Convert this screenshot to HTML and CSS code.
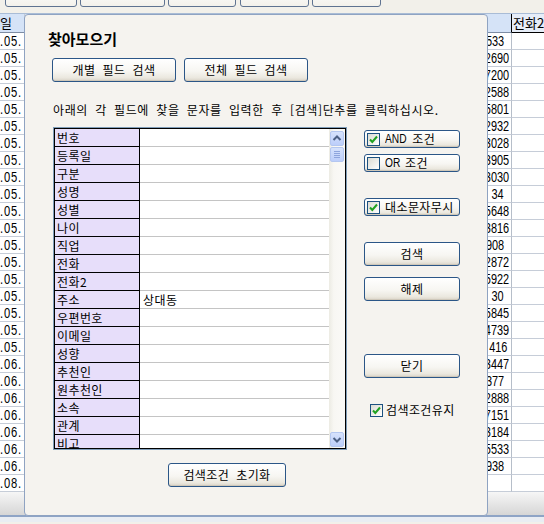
FILE: index.html
```html
<!DOCTYPE html>
<html lang="ko">
<head>
<meta charset="utf-8">
<title>찾아모으기</title>
<link rel="stylesheet" href="styles.css">
</head>
<body>
<div class="app">
  <div class="toolbar">
    <span class="tbtn t1"></span>
    <span class="tbtn t2"></span>
    <span class="tbtn t3"></span>
    <span class="tbtn t4"></span>
    <span class="tbtn t5"></span>
  </div>
  <div class="grid">
    <div class="row head"><div class="cell c1">일</div><div class="cell c2"></div><div class="cell c3">전화2</div></div>
    <div class="row"><div class="cell c1"><span class="d">.05.</span></div><div class="cell c2 s"><span class="n">3533</span></div><div class="cell c3"></div></div>
    <div class="row"><div class="cell c1"><span class="d">.05.</span></div><div class="cell c2"><span class="n">2690</span></div><div class="cell c3"></div></div>
    <div class="row"><div class="cell c1"><span class="d">.05.</span></div><div class="cell c2"><span class="n">7200</span></div><div class="cell c3"></div></div>
    <div class="row"><div class="cell c1"><span class="d">.05.</span></div><div class="cell c2"><span class="n">2588</span></div><div class="cell c3"></div></div>
    <div class="row"><div class="cell c1"><span class="d">.05.</span></div><div class="cell c2"><span class="n">5801</span></div><div class="cell c3"></div></div>
    <div class="row"><div class="cell c1"><span class="d">.05.</span></div><div class="cell c2"><span class="n">2932</span></div><div class="cell c3"></div></div>
    <div class="row"><div class="cell c1"><span class="d">.05.</span></div><div class="cell c2"><span class="n">3028</span></div><div class="cell c3"></div></div>
    <div class="row"><div class="cell c1"><span class="d">.05.</span></div><div class="cell c2"><span class="n">3905</span></div><div class="cell c3"></div></div>
    <div class="row"><div class="cell c1"><span class="d">.05.</span></div><div class="cell c2"><span class="n">3030</span></div><div class="cell c3"></div></div>
    <div class="row"><div class="cell c1"><span class="d">.05.</span></div><div class="cell c2 s"><span class="n">34</span></div><div class="cell c3"></div></div>
    <div class="row"><div class="cell c1"><span class="d">.05.</span></div><div class="cell c2"><span class="n">5648</span></div><div class="cell c3"></div></div>
    <div class="row"><div class="cell c1"><span class="d">.05.</span></div><div class="cell c2"><span class="n">3816</span></div><div class="cell c3"></div></div>
    <div class="row"><div class="cell c1"><span class="d">.05.</span></div><div class="cell c2 s"><span class="n">1908</span></div><div class="cell c3"></div></div>
    <div class="row"><div class="cell c1"><span class="d">.05.</span></div><div class="cell c2"><span class="n">2872</span></div><div class="cell c3"></div></div>
    <div class="row"><div class="cell c1"><span class="d">.05.</span></div><div class="cell c2"><span class="n">5922</span></div><div class="cell c3"></div></div>
    <div class="row"><div class="cell c1"><span class="d">.05.</span></div><div class="cell c2 s"><span class="n">30</span></div><div class="cell c3"></div></div>
    <div class="row"><div class="cell c1"><span class="d">.05.</span></div><div class="cell c2"><span class="n">5845</span></div><div class="cell c3"></div></div>
    <div class="row"><div class="cell c1"><span class="d">.05.</span></div><div class="cell c2"><span class="n">4739</span></div><div class="cell c3"></div></div>
    <div class="row"><div class="cell c1"><span class="d">.05.</span></div><div class="cell c2 m"><span class="n">416</span></div><div class="cell c3"></div></div>
    <div class="row"><div class="cell c1"><span class="d">.06.</span></div><div class="cell c2"><span class="n">3447</span></div><div class="cell c3"></div></div>
    <div class="row"><div class="cell c1"><span class="d">.06.</span></div><div class="cell c2 s"><span class="n">1377</span></div><div class="cell c3"></div></div>
    <div class="row"><div class="cell c1"><span class="d">.06.</span></div><div class="cell c2"><span class="n">2888</span></div><div class="cell c3"></div></div>
    <div class="row"><div class="cell c1"><span class="d">.06.</span></div><div class="cell c2"><span class="n">7151</span></div><div class="cell c3"></div></div>
    <div class="row"><div class="cell c1"><span class="d">.06.</span></div><div class="cell c2"><span class="n">3184</span></div><div class="cell c3"></div></div>
    <div class="row"><div class="cell c1"><span class="d">.06.</span></div><div class="cell c2"><span class="n">5533</span></div><div class="cell c3"></div></div>
    <div class="row"><div class="cell c1"><span class="d">.06.</span></div><div class="cell c2 s"><span class="n">1938</span></div><div class="cell c3"></div></div>
    <div class="row"><div class="cell c1"><span class="d">.08.</span></div><div class="cell c2"></div><div class="cell c3"></div></div>
  </div>
  <div class="status"></div>
  <div class="bottomline"></div>

  <div class="dialog">
    <h1 class="title">찾아모으기</h1>
    <div class="tabs">
      <div class="btn tab">개별 필드 검색</div>
      <div class="btn tab">전체 필드 검색</div>
    </div>
    <p class="hint">아래의 각 필드에 찾을 문자를 입력한 후 [검색]단추를 클릭하십시오.</p>
    <div class="main">
      <div class="listbox">
        <div class="listinner">
          <div class="fields">
            <div class="frow"><div class="flabel">번호</div><div class="fval"></div></div>
            <div class="frow"><div class="flabel">등록일</div><div class="fval"></div></div>
            <div class="frow"><div class="flabel">구분</div><div class="fval"></div></div>
            <div class="frow"><div class="flabel">성명</div><div class="fval"></div></div>
            <div class="frow"><div class="flabel">성별</div><div class="fval"></div></div>
            <div class="frow"><div class="flabel">나이</div><div class="fval"></div></div>
            <div class="frow"><div class="flabel">직업</div><div class="fval"></div></div>
            <div class="frow"><div class="flabel">전화</div><div class="fval"></div></div>
            <div class="frow"><div class="flabel">전화2</div><div class="fval"></div></div>
            <div class="frow"><div class="flabel">주소</div><div class="fval">상대동</div></div>
            <div class="frow"><div class="flabel">우편번호</div><div class="fval"></div></div>
            <div class="frow"><div class="flabel">이메일</div><div class="fval"></div></div>
            <div class="frow"><div class="flabel">성향</div><div class="fval"></div></div>
            <div class="frow"><div class="flabel">추천인</div><div class="fval"></div></div>
            <div class="frow"><div class="flabel">원추천인</div><div class="fval"></div></div>
            <div class="frow"><div class="flabel">소속</div><div class="fval"></div></div>
            <div class="frow"><div class="flabel">관계</div><div class="fval"></div></div>
            <div class="frow"><div class="flabel">비고</div><div class="fval"></div></div>
          </div>
          <div class="vscroll">
            <div class="sbtn"><svg width="14" height="15" viewBox="0 0 14 15"><polyline points="3.5,9 7,5.5 10.5,9" fill="none" stroke="#4d6185" stroke-width="2"/></svg></div>
            <div class="sbtn thumb"><svg width="14" height="15" viewBox="0 0 14 15"><g stroke="#8ea5dd" stroke-width="1"><line x1="4" y1="4.5" x2="10" y2="4.5"/><line x1="4" y1="6.5" x2="10" y2="6.5"/><line x1="4" y1="8.5" x2="10" y2="8.5"/><line x1="4" y1="10.5" x2="10" y2="10.5"/></g></svg></div>
            <div class="track"></div>
            <div class="sbtn"><svg width="14" height="15" viewBox="0 0 14 15"><polyline points="3.5,6 7,9.5 10.5,6" fill="none" stroke="#4d6185" stroke-width="2"/></svg></div>
          </div>
        </div>
      </div>
      <div class="side">
        <div class="btn chkbtn b-and"><span class="chk"><svg width="11" height="11" viewBox="0 0 11 11"><polyline points="2,5.5 4.3,8 9,2.5" fill="none" stroke="#21a121" stroke-width="2"/></svg></span><span class="lat">AND</span> 조건</div>
        <div class="btn chkbtn b-or"><span class="chk"></span><span class="lat">OR</span> 조건</div>
        <div class="btn chkbtn b-case"><span class="chk"><svg width="11" height="11" viewBox="0 0 11 11"><polyline points="2,5.5 4.3,8 9,2.5" fill="none" stroke="#21a121" stroke-width="2"/></svg></span>대소문자무시</div>
        <div class="btn push b-search">검색</div>
        <div class="btn push b-clear">해제</div>
        <div class="btn push b-close">닫기</div>
        <div class="keep"><span class="chk"><svg width="11" height="11" viewBox="0 0 11 11"><polyline points="2,5.5 4.3,8 9,2.5" fill="none" stroke="#21a121" stroke-width="2"/></svg></span>검색조건유지</div>
      </div>
    </div>
    <div class="btn reset">검색조건 초기화</div>
  </div>
</div>
</body>
</html>
```
FILE: styles.css
```css
* { box-sizing: border-box; margin: 0; padding: 0; }
html, body { width: 544px; height: 524px; overflow: hidden; }
body {
  background: #f2f0ea;
  font-family: "Noto Sans CJK KR", "Noto Sans", sans-serif;
  font-size: 12px;
  color: #000;
}
.app { position: relative; width: 544px; height: 524px; overflow: hidden; }

/* toolbar remnants */
.toolbar {
  height: 14px;
  border-bottom: 1px solid #a9bcd6;
  display: flex;
  align-items: flex-start;
  gap: 3px;
  padding-left: 5px;
  overflow: hidden;
  background: #f2f0ea;
}
.tbtn {
  height: 20px;
  margin-top: -13px;
  border: 1px solid #5f7391;
  border-radius: 3px;
  background: linear-gradient(#ffffff, #f3f1eb);
}
.t1 { width: 72px; }
.t2 { width: 85px; }
.t3 { width: 68px; }
.t4 { width: 69px; margin-left: 1px; }
.t5 { width: 69px; }

/* background grid */
.grid { background: #fff; }
.row { display: flex; height: 17px; }
.cell {
  height: 100%;
  border-bottom: 1px solid #c6cdd8;
  overflow: hidden;
  white-space: nowrap;
  font-family: "Liberation Sans", sans-serif;
  font-size: 14px;
  line-height: 16px;
}
.n {
  display: inline-block;
  transform: scaleX(0.78);
  transform-origin: 100% 50%;
}
.d {
  display: inline-block;
  letter-spacing: 1px;
  transform: scaleX(0.8);
  transform-origin: 0 50%;
}
.c1 { width: 25px; border-right: 1px solid #c6cdd8; }
.c2 { width: 487px; border-right: 1px solid #b6bec9; text-align: right; padding-right: 2px; }
.c2.s { padding-right: 7px; }
.c2.m { padding-right: 4px; }
.c3 { flex: 1; }
.row.head { height: 19px; }
.head .cell {
  background: #d5e3f7;
  border-bottom: 1px solid #7d8ca3;
  font-family: "Noto Sans CJK KR", sans-serif;
  font-size: 13px;
  line-height: 18px;
}
.head .c2 { border-right: 1px solid #000; }
.head .c3 { background: #e6edf8; border-bottom: 1px solid #000; padding-left: 1px; }

.status {
  height: 23px;
  background: linear-gradient(#f6f6f6, #d6d6d6);
}
.bottomline {
  height: 7px;
  border-top: 2px solid #8ea4c6;
  background: #e9edf3;
}

/* dialog window */
.dialog {
  position: absolute;
  left: 24px;
  top: 14px;
  width: 464px;
  height: 502px;
  border: 1px solid #8fa3c2;
  border-radius: 4px;
  background: #f5f3ef;
  padding-top: 16px;
  word-spacing: 3.3px;
  letter-spacing: 0.4px;
}
.title {
  font-size: 15px;
  font-weight: bold;
  line-height: 16px;
  margin-left: 23px;
  letter-spacing: 0;
}
.tabs {
  display: flex;
  gap: 8px;
  margin-top: 11px;
  margin-left: 27px;
}
.btn {
  display: flex;
  align-items: center;
  justify-content: center;
  border: 1px solid #2b5687;
  border-radius: 3px;
  background: linear-gradient(#ffffff 0%, #f7f6f2 55%, #ebe8df 85%, #d9d3c7 100%);
  box-shadow: inset 0 -1px 0 #cfc8ba;
  white-space: nowrap;
  font-size: 12px;
  line-height: 14px;
}
.tab { width: 124px; height: 24px; }
.hint {
  margin-top: 21px;
  margin-left: 28px;
  line-height: 14px;
  white-space: nowrap;
  letter-spacing: 0.6px;
}
.main {
  display: flex;
  gap: 17px;
  margin-top: 10px;
  margin-left: 28px;
}
.listbox {
  width: 294px;
  height: 323px;
  border: 1px solid #7f9db9;
}
.listinner {
  height: 100%;
  border: 1px solid #000;
  display: flex;
  overflow: hidden;
  background: #fff;
}
.fields { flex: 1; overflow: hidden; }
.frow { display: flex; height: 18px; }
.flabel {
  width: 85px;
  background: #e7defa;
  border-right: 1px solid #000;
  border-bottom: 1px solid #000;
  padding-left: 2px;
  line-height: 17px;
}
.fval {
  flex: 1;
  border-bottom: 1px solid #c4c4c4;
  padding-left: 3px;
  line-height: 17px;
}
.vscroll {
  width: 16px;
  display: flex;
  flex-direction: column;
  padding: 1px 0 1px 1px;
  background: linear-gradient(90deg, #ecebe3, #f8f7f3 30%, #fbfaf7);
}
.sbtn {
  width: 14px;
  height: 15px;
  margin-top: 1px;
  border: 1px solid #b4c7f0;
  border-radius: 2px;
  background: linear-gradient(#d6e2fc, #bccefa);
  display: flex;
}
.sbtn svg { margin: -1px; }
.track { flex: 1; }

.side {
  width: 96px;
  display: flex;
  flex-direction: column;
}
.chkbtn {
  height: 18px;
  justify-content: flex-start;
  padding-left: 2px;
  gap: 5px;
}
.chk {
  width: 13px;
  height: 13px;
  border: 1px solid #1c5180;
  background: linear-gradient(135deg, #dcdbd3, #ffffff);
  display: flex;
  align-items: center;
  justify-content: center;
  flex: none;
}
.lat {
  font-family: "Liberation Sans", sans-serif;
  display: inline-block;
  font-size: 12px;
  letter-spacing: 0;
  transform: scaleX(0.85);
  transform-origin: 0 50%;
  margin-right: -3px;
}
.b-and { margin-top: 3px; }
.b-or { margin-top: 6px; }
.b-case { margin-top: 26px; }
.push { height: 24px; }
.b-search { margin-top: 26px; }
.b-clear { margin-top: 11px; }
.b-close { margin-top: 53px; }
.keep {
  margin-top: 25px;
  margin-left: 6px;
  height: 14px;
  display: flex;
  align-items: center;
  gap: 3px;
  line-height: 14px;
  white-space: nowrap;
}
.reset {
  width: 118px;
  height: 24px;
  margin-top: 13px;
  margin-left: 143px;
}
```
